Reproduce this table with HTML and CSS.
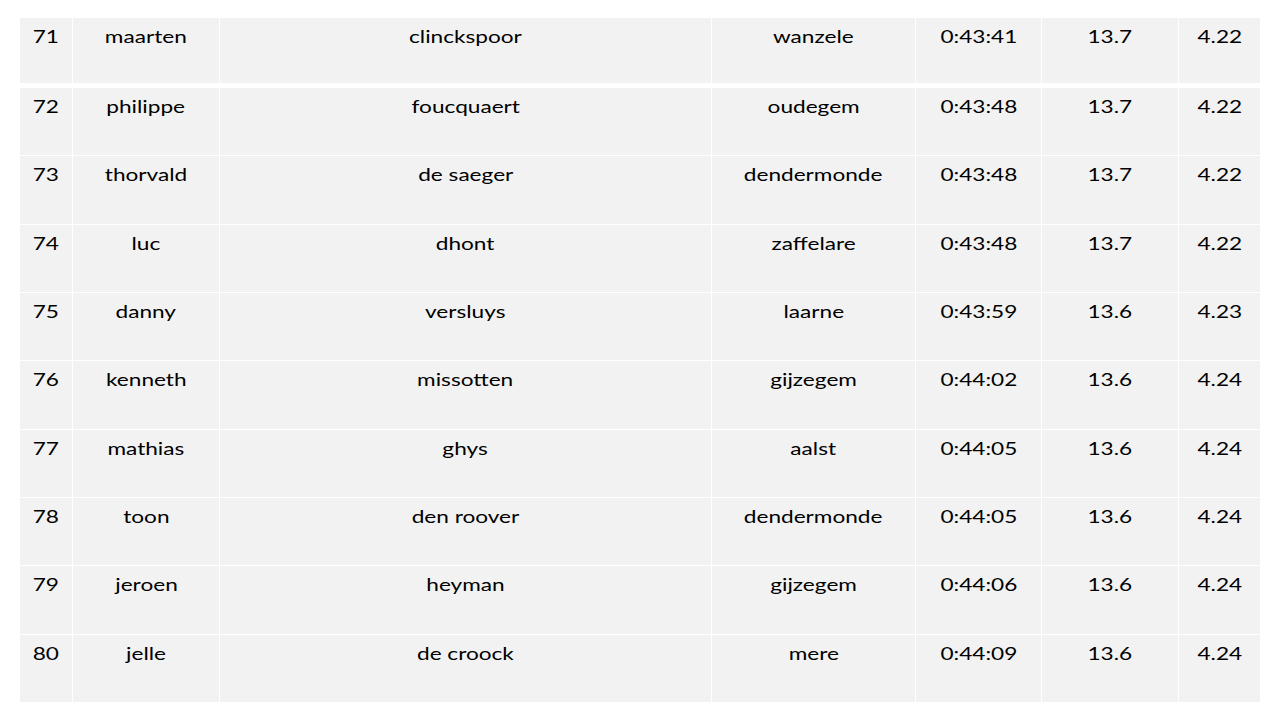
FILE: index.html
```html
<!DOCTYPE html>
<html>
<head>
<meta charset="utf-8">
<link rel="stylesheet" href="styles.css">
</head>
<body>
<div class="table">
  <div class="row first"><div class="c"><span class="t">71</span></div><div class="c"><span class="t">maarten</span></div><div class="c"><span class="t">clinckspoor</span></div><div class="c"><span class="t">wanzele</span></div><div class="c"><span class="t">0:43:41</span></div><div class="c"><span class="t">13.7</span></div><div class="c"><span class="t">4.22</span></div></div>
  <div class="row"><div class="c"><span class="t">72</span></div><div class="c"><span class="t">philippe</span></div><div class="c"><span class="t">foucquaert</span></div><div class="c"><span class="t">oudegem</span></div><div class="c"><span class="t">0:43:48</span></div><div class="c"><span class="t">13.7</span></div><div class="c"><span class="t">4.22</span></div></div>
  <div class="row"><div class="c"><span class="t">73</span></div><div class="c"><span class="t">thorvald</span></div><div class="c"><span class="t">de saeger</span></div><div class="c"><span class="t">dendermonde</span></div><div class="c"><span class="t">0:43:48</span></div><div class="c"><span class="t">13.7</span></div><div class="c"><span class="t">4.22</span></div></div>
  <div class="row"><div class="c"><span class="t">74</span></div><div class="c"><span class="t">luc</span></div><div class="c"><span class="t">dhont</span></div><div class="c"><span class="t">zaffelare</span></div><div class="c"><span class="t">0:43:48</span></div><div class="c"><span class="t">13.7</span></div><div class="c"><span class="t">4.22</span></div></div>
  <div class="row"><div class="c"><span class="t">75</span></div><div class="c"><span class="t">danny</span></div><div class="c"><span class="t">versluys</span></div><div class="c"><span class="t">laarne</span></div><div class="c"><span class="t">0:43:59</span></div><div class="c"><span class="t">13.6</span></div><div class="c"><span class="t">4.23</span></div></div>
  <div class="row"><div class="c"><span class="t">76</span></div><div class="c"><span class="t">kenneth</span></div><div class="c"><span class="t">missotten</span></div><div class="c"><span class="t">gijzegem</span></div><div class="c"><span class="t">0:44:02</span></div><div class="c"><span class="t">13.6</span></div><div class="c"><span class="t">4.24</span></div></div>
  <div class="row"><div class="c"><span class="t">77</span></div><div class="c"><span class="t">mathias</span></div><div class="c"><span class="t">ghys</span></div><div class="c"><span class="t">aalst</span></div><div class="c"><span class="t">0:44:05</span></div><div class="c"><span class="t">13.6</span></div><div class="c"><span class="t">4.24</span></div></div>
  <div class="row"><div class="c"><span class="t">78</span></div><div class="c"><span class="t">toon</span></div><div class="c"><span class="t">den roover</span></div><div class="c"><span class="t">dendermonde</span></div><div class="c"><span class="t">0:44:05</span></div><div class="c"><span class="t">13.6</span></div><div class="c"><span class="t">4.24</span></div></div>
  <div class="row"><div class="c"><span class="t">79</span></div><div class="c"><span class="t">jeroen</span></div><div class="c"><span class="t">heyman</span></div><div class="c"><span class="t">gijzegem</span></div><div class="c"><span class="t">0:44:06</span></div><div class="c"><span class="t">13.6</span></div><div class="c"><span class="t">4.24</span></div></div>
  <div class="row"><div class="c"><span class="t">80</span></div><div class="c"><span class="t">jelle</span></div><div class="c"><span class="t">de croock</span></div><div class="c"><span class="t">mere</span></div><div class="c"><span class="t">0:44:09</span></div><div class="c"><span class="t">13.6</span></div><div class="c"><span class="t">4.24</span></div></div>
</div>
</body>
</html>
```
FILE: styles.css
```css
html, body {
  margin: 0;
  padding: 0;
  background: #ffffff;
}
body {
  width: 1280px;
  height: 720px;
  overflow: hidden;
  padding: 18px 0 0 20px;
  box-sizing: border-box;
  font-family: Lato, "Open Sans", "Liberation Sans", sans-serif;
  font-size: 17px;
  color: #000000;
}
.table {
  display: flex;
  flex-direction: column;
  gap: 1px;
  width: 1240px;
}
.row {
  display: grid;
  grid-template-columns: 52px 146px 491px 203px 125px 136px 81px;
  column-gap: 1px;
  height: 67.33px;
}
.row.first {
  height: 65px;
  margin-bottom: 4px;
}
.c {
  background: #f2f2f2;
  text-align: center;
  padding-top: 7px;
  line-height: 24px;
}
.t {
  display: inline-block;
  white-space: nowrap;
  transform: scaleX(1.33);
}
```
